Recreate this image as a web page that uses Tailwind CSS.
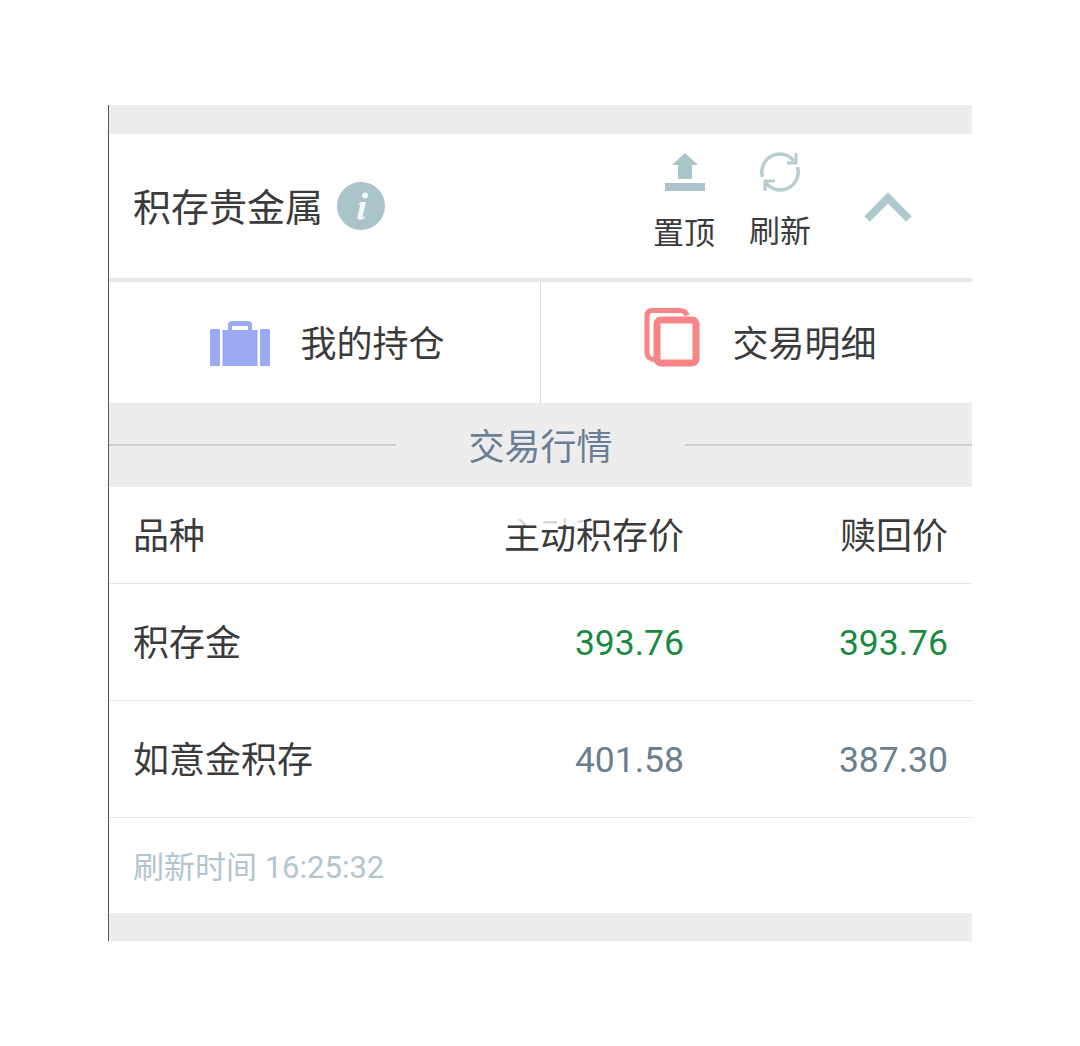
<!DOCTYPE html>
<html lang="zh-CN">
<head>
    <meta charset="UTF-8">
    <script src="https://cdn.jsdelivr.net/npm/@tailwindcss/browser@4"></script>
    <title>积存贵金属</title>
</head>
<body class="bg-white font-['Roboto','Noto_Sans_CJK_SC',sans-serif] text-[#3b3b3b]">
<div class="w-[1080px] h-[1046px] pt-[105px] pl-[108px] overflow-hidden">
  <div class="w-[864px] border-l border-[#555] box-border">
    <div class="h-[29px] bg-[#ededed]"></div>

    <!-- header -->
    <div class="h-[144px] flex items-center pl-[24px]">
      <div class="text-[38px] leading-none mt-[4px]">积存贵金属</div>
      <svg class="ml-[14px] w-[48px] h-[48px]" viewBox="0 0 48 48">
        <circle cx="24" cy="24" r="24" fill="#a9c5c9"/>
        <circle cx="28" cy="13.500" r="3" fill="#fff" opacity="0.85"/>
        <path d="M24 20h5l-3.600 15 2.600-.8-.5 2.300c-2 .9-3.500 1.300-5 1.300-1.800 0-2.400-1-2-2.800l2.700-12-1.900-.2z" fill="#fff" opacity="0.85"/>
      </svg>
      <div class="ml-auto flex">
        <div class="w-[96px] flex flex-col items-center mt-[-12px]">
          <svg class="w-[42px] h-[40px] ml-[2px]" viewBox="0 0 42 40" fill="#a9c5c9">
            <path d="M21 1 34 13H28V27H14V13H8z"/>
            <rect x="1" y="31" width="40" height="8"/>
          </svg>
          <div class="text-[31px] leading-none mt-[26px]">置顶</div>
        </div>
        <div class="w-[96px] flex flex-col items-center mt-[-12px]">
          <svg class="w-[42px] h-[42px] mt-[-1px]" viewBox="0 0 42 42" fill="none" stroke="#b5cdcf" stroke-width="3.500">
            <path d="M3.500 26A18 18 0 0 1 35 10"/>
            <path d="M38.500 16A18 18 0 0 1 7 32"/>
            <path d="M37 2V12H28" stroke-width="3"/>
            <path d="M6 40V30H16" stroke-width="3"/>
          </svg>
          <div class="text-[31px] leading-none mt-[23px]">刷新</div>
        </div>
        <svg class="ml-[36px] mr-[60px] w-[48px] h-[32px] mt-[28px]" viewBox="0 0 48 32" fill="none" stroke="#b0c9cf" stroke-width="8">
          <path d="M3 27 24 6 45 27"/>
        </svg>
      </div>
    </div>
    <div class="h-[4px] bg-[#e3e8e8]"></div>

    <!-- tabs -->
    <div class="h-[121px] flex">
      <div class="w-[432px] flex items-center justify-center border-r border-[#d8dddd] pl-[6px]">
        <svg class="w-[60px] h-[46px]" viewBox="0 0 60 46" fill="#99a9f2">
          <rect x="0" y="9" width="10" height="37" rx="1.500"/>
          <rect x="50" y="9" width="10" height="37" rx="1.500"/>
          <path d="M12.500 10H18V5q0-4 4-4h16q4 0 4 4v5h5.500v36h-35zM22 10h16V6H22z" fill-rule="evenodd"/>
        </svg>
        <div class="ml-[30px] text-[36px] leading-none mt-[4px]">我的持仓</div>
      </div>
      <div class="flex-1 flex items-center justify-center pl-[8px]">
        <svg class="w-[56px] h-[60px] mt-[-10px]" viewBox="0 0 56 60" fill="none" stroke="#f58587">
          <path d="M10 52C4 50 3 48 3 44V8q0-5.500 5.500-5.500h27q6 0 7.500 5" stroke-width="5"/>
          <rect x="13" y="12" width="39" height="43" rx="4" stroke-width="7"/>
        </svg>
        <div class="ml-[32px] text-[36px] leading-none mt-[4px]">交易明细</div>
      </div>
    </div>

    <!-- section title -->
    <div class="h-[84px] bg-[#ededed] flex items-center text-[#6a7f95]">
      <div class="w-[287px] h-[2px] bg-[#cfcfcf] mt-[-1px]"></div>
      <div class="flex-1 text-center text-[36px] leading-none mt-[6px]">交易行情</div>
      <div class="w-[287px] h-[2px] bg-[#cfcfcf] mt-[-1px]"></div>
    </div>

    <!-- table -->
    <div class="h-[97px] flex items-center px-[24px] border-b border-[#e4e6e6] text-[36px] leading-none">
      <div class="flex-1 mt-[4px]">品种</div>
      <div class="w-[280px] text-right relative mt-[4px]">
        主动积存价
        <span class="absolute left-[100px] top-[-1px] w-[80px] h-[7px] bg-white/80"></span>
      </div>
      <div class="w-[264px] text-right mt-[4px]">赎回价</div>
    </div>
    <div class="h-[117px] flex items-center px-[24px] border-b border-[#e4e6e6] text-[36px] leading-none">
      <div class="flex-1 mt-[4px]">积存金</div>
      <div class="w-[280px] text-right text-[#1a8a43] text-[35.500px] mt-[4px]">393.76</div>
      <div class="w-[264px] text-right text-[#1a8a43] text-[35.500px] mt-[4px]">393.76</div>
    </div>
    <div class="h-[117px] flex items-center px-[24px] border-b border-[#e4e6e6] text-[36px] leading-none">
      <div class="flex-1 mt-[4px]">如意金积存</div>
      <div class="w-[280px] text-right text-[#6b7f8e] text-[35.500px] mt-[4px]">401.58</div>
      <div class="w-[264px] text-right text-[#6b7f8e] text-[35.500px] mt-[4px]">387.30</div>
    </div>
    <div class="h-[95px] flex items-center px-[24px] text-[31px] leading-none text-[#b3c6d0]"><span class="mt-[4px]">刷新时间 16:25:32</span></div>
    <div class="h-[28px] bg-[#ededed]"></div>
  </div>
</div>
</body>
</html>
